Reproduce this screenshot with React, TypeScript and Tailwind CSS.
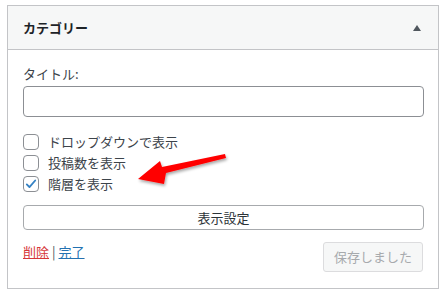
const font = { fontFamily: '"Noto Sans CJK JP", "Noto Sans", sans-serif' };

const Check = ({ checked, label }: { checked?: boolean; label: string }) => (
  <label className="flex items-center h-[21px] gap-[9px] text-[13px] text-[#3c434a]">
    <span className="w-4 h-4 rounded-[4px] border border-[#8c8f94] bg-white flex items-center justify-center shrink-0">
      {checked && (
        <svg width="14" height="14" viewBox="0 0 20 20">
          <path d="M4 10.5l3.8 4L16 5" fill="none" stroke="#3582c4" strokeWidth="2.6" strokeLinecap="round" strokeLinejoin="round" />
        </svg>
      )}
    </span>
    {label}
  </label>
);

export default function App() {
  return (
    <div className="relative w-[443px] h-[299px] bg-white pt-[5px] pl-[7px]" style={font}>
      <div className="w-[432px] h-[284px] border border-[#c3c4c7] flex flex-col">
        <div className="h-[44px] bg-[#f6f7f7] border-b border-[#c3c4c7] flex items-center justify-between pl-[15px] pr-[17px]">
          <span className="text-[13px] font-semibold text-[#1d2327]">カテゴリー</span>
          <svg width="8" height="6" viewBox="0 0 8 6">
            <path d="M0 6L4 0L8 6Z" fill="#50575e" />
          </svg>
        </div>
        <div className="flex flex-col px-[15px] pt-[15px]">
          <span className="text-[13px] text-[#3c434a] leading-[18px]">タイトル:</span>
          <div className="mt-[3px] h-[31px] w-[401px] rounded-[4px] border border-[#8c8f94] bg-white" />
          <div className="mt-[14px] flex flex-col">
            <Check label="ドロップダウンで表示" />
            <Check label="投稿数を表示" />
            <Check checked label="階層を表示" />
          </div>
          <button className="mt-[11px] h-[25px] w-[401px] rounded-[4px] border border-[#a7aaad] bg-white text-[13px] text-[#2c3338]">
            表示設定
          </button>
          <div className="mt-[12px] flex justify-between items-start">
            <div className="text-[13px]">
              <a href="#" className="text-[#d63638] underline">削除</a>
              <span className="text-[#50575e] mx-[3px]">|</span>
              <a href="#" className="text-[#2271b1] underline">完了</a>
            </div>
            <button className="h-[30px] w-[100px] rounded-[3px] border border-[#dcdcde] bg-[#f6f7f7] text-[13px] text-[#a7aaad]">
              保存しました
            </button>
          </div>
        </div>
      </div>
      <svg className="absolute left-0 top-0 pointer-events-none" width="443" height="299">
        <defs>
          <filter id="sh" x="-20%" y="-50%" width="140%" height="200%">
            <feDropShadow dx="1" dy="2" stdDeviation="1.5" floodColor="#000" floodOpacity="0.35" />
          </filter>
        </defs>
        <polygon
          points="138,179 160,161 162,167 225,154 226,158 166,173 164,184"
          fill="#ff0000"
          filter="url(#sh)"
        />
      </svg>
    </div>
  );
}
